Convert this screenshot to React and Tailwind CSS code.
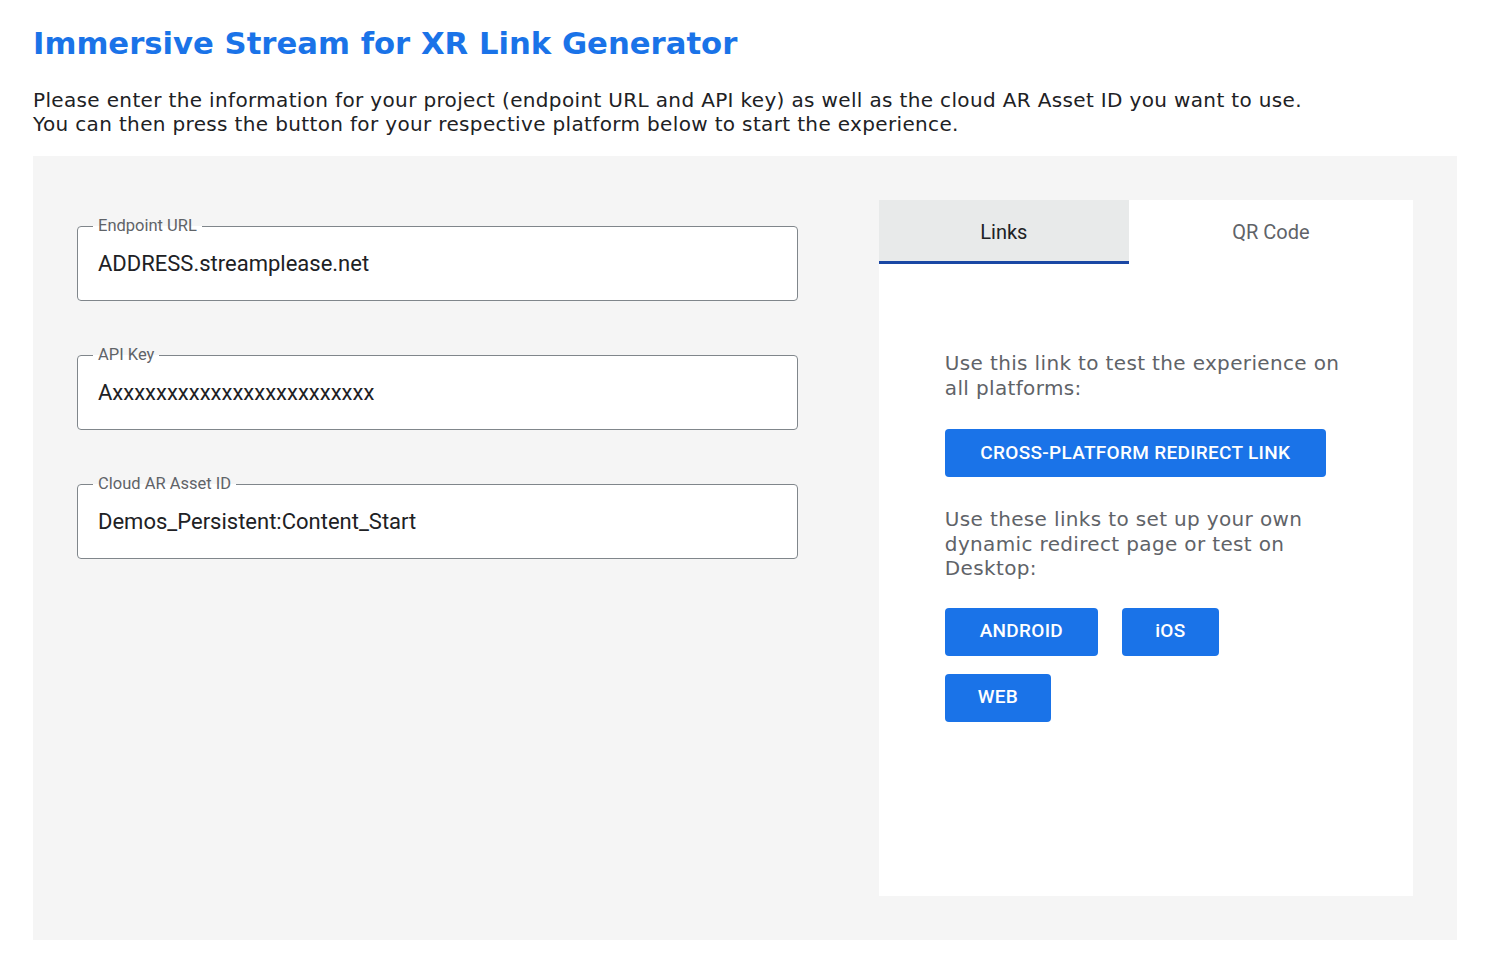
import React from 'react';

const fields = [
  { label: 'Endpoint URL', value: 'ADDRESS.streamplease.net' },
  { label: 'API Key', value: 'Axxxxxxxxxxxxxxxxxxxxxxxx' },
  { label: 'Cloud AR Asset ID', value: 'Demos_Persistent:Content_Start' },
];

function Field({ label, value }) {
  return (
    <fieldset className="border border-[#80868b] rounded-[4px] bg-white">
      <legend className="ml-[15px] px-[5px] text-[16.5px] leading-[18px] text-[#5f6368] font-['Roboto',sans-serif]">
        {label}
      </legend>
      <div className="h-[65px] pb-[9px] pl-[20px] flex items-center text-[22px] text-[#202124] font-['Roboto',sans-serif]">
        {value}
      </div>
    </fieldset>
  );
}

function Btn({ children, className = '' }) {
  return (
    <button className={`h-[48px] rounded-[4px] bg-[#1a73e8] text-white text-[19px] font-medium tracking-[0.3px] font-['Roboto',sans-serif] ${className}`}>
      {children}
    </button>
  );
}

export default function App() {
  return (
    <div className="min-h-[967px] bg-white px-[33px] pt-[24px] font-['DejaVu_Sans',Verdana,sans-serif]">
      <h1 className="text-[30.7px] leading-[40px] font-bold text-[#1a73e8]">
        Immersive Stream for XR Link Generator
      </h1>
      <p className="mt-[24px] text-[20px] leading-[24px] tracking-[0.35px] text-[#202124]">
        Please enter the information for your project (endpoint URL and API key) as well as the cloud AR Asset ID you want to use.
        <br />
        You can then press the button for your respective platform below to start the experience.
      </p>

      <div className="mt-[20px] w-[1424px] h-[784px] bg-[#f5f5f5] p-[44px] flex gap-[81px]">
        {/* left: inputs */}
        <div className="w-[722px] pt-[17px] flex flex-col gap-[45px]">
          {fields.map((f) => (
            <Field key={f.label} {...f} />
          ))}
        </div>

        {/* right: tabs card */}
        <div className="w-[535px] h-[696px] bg-white flex flex-col">
          <div className="flex h-[64px] font-['Roboto',sans-serif] text-[20px]">
            <div className="w-[250px] bg-[#e8eaea] border-b-[3px] border-[#1a47a4] flex items-center justify-center pt-[3px] text-[#202124]">
              Links
            </div>
            <div className="flex-1 flex items-center justify-center text-[#5f6368]">
              QR Code
            </div>
          </div>
          <div className="pl-[66px] pr-[60px] pt-[87px] text-[20px] leading-[24.5px] tracking-[0.35px] text-[#5f6368]">
            <p className="w-[400px]">Use this link to test the experience on all platforms:</p>
            <Btn className="mt-[29px] w-[381px]">CROSS-PLATFORM REDIRECT LINK</Btn>
            <p className="mt-[30px] w-[380px]">Use these links to set up your own dynamic redirect page or test on Desktop:</p>
            <div className="mt-[27px] flex flex-wrap gap-x-[24px] gap-y-[18px] w-[300px]">
              <Btn className="w-[153px]">ANDROID</Btn>
              <Btn className="w-[97px]">iOS</Btn>
              <Btn className="w-[106px]">WEB</Btn>
            </div>
          </div>
        </div>
      </div>
    </div>
  );
}
